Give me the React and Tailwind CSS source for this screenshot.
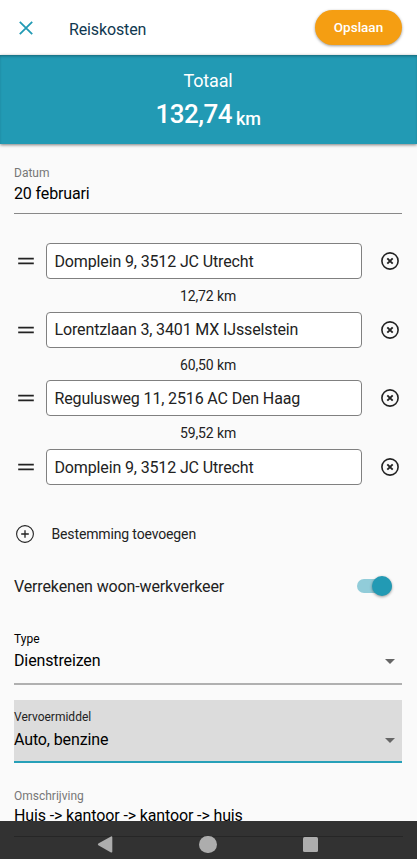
import React, { useState } from "react";

const initialStops = [
  { id: 1, address: "Domplein 9, 3512 JC Utrecht", distance: "12,72 km" },
  { id: 2, address: "Lorentzlaan 3, 3401 MX IJsselstein", distance: "60,50 km" },
  { id: 3, address: "Regulusweg 11, 2516 AC Den Haag", distance: "59,52 km" },
  { id: 4, address: "Domplein 9, 3512 JC Utrecht", distance: null },
];

const CloseIcon = () => (
  <svg width="14" height="14" viewBox="0 0 14 14" fill="none" stroke="#229ab4" strokeWidth="1.8">
    <path d="M0.8 0.8 13.2 13.2M13.2 0.8 0.8 13.2" />
  </svg>
);

const DragIcon = () => (
  <svg width="16" height="8" viewBox="0 0 16 8" fill="none" stroke="#222" strokeWidth="1.7">
    <path d="M0.2 1.6H15.8M0.2 6.4H15.8" />
  </svg>
);

const RemoveIcon = () => (
  <svg width="18" height="18" viewBox="0 0 18 18" fill="none" stroke="#222" strokeWidth="1.6">
    <circle cx="9" cy="9" r="8.1" />
    <path d="M6.3 6.3 11.7 11.7M11.7 6.3 6.3 11.7" strokeWidth="1.9" />
  </svg>
);

const AddIcon = () => (
  <svg width="18" height="18" viewBox="0 0 18 18" fill="none" stroke="#222" strokeWidth="1.1">
    <circle cx="9" cy="9" r="8.4" />
    <path d="M9 5.2V12.8M5.2 9H12.8" strokeWidth="1.3" />
  </svg>
);

const Caret = () => (
  <svg width="10" height="5" viewBox="0 0 10 5" fill="#666">
    <path d="M0 0H10L5 5Z" />
  </svg>
);

const StopRow = ({ stop }) => (
  <div>
    <div className="flex h-9 items-center">
      <button className="w-[31.5px] pl-1">
        <DragIcon />
      </button>
      <div className="flex h-9 w-[316.5px] items-center rounded-[4px] border border-[#808080] bg-white pt-px pl-2 text-[16px] tracking-[-0.14px] text-[#222]">
        {stop.address}
      </div>
      <button className="ml-[19px]">
        <RemoveIcon />
      </button>
    </div>
    {stop.distance && (
      <div className="flex h-[32.7px] items-center justify-center pt-[2px] text-[14px] tracking-[-0.12px] text-[#222]">
        {stop.distance}
      </div>
    )}
  </div>
);

const App = () => {
  const [stops] = useState(initialStops);
  const [settle, setSettle] = useState(true);

  return (
    <div className="flex h-[859px] w-[417px] flex-col overflow-hidden bg-[#fafafa] font-['Roboto',sans-serif]">
      {/* Header */}
      <header className="flex h-[55px] shrink-0 items-center bg-white pr-[15px] pl-[19px]">
        <button>
          <CloseIcon />
        </button>
        <h1 className="ml-9 flex-1 pt-1 text-[16px] tracking-[-0.13px] text-[#103850]">Reiskosten</h1>
        <button className="h-[35px] w-[87px] rounded-full bg-[#f59e12] text-[13.5px] font-medium text-white shadow-[0_1px_3px_rgba(0,0,0,0.4)]">
          Opslaan
        </button>
      </header>

      {/* Total */}
      <section className="flex h-[89px] shrink-0 flex-col items-center bg-[#229ab4] pt-[14px] pr-px text-white shadow-[inset_0_2px_3px_-1px_rgba(0,0,0,0.35),0_1px_3px_rgba(0,0,0,0.5)]">
        <div className="text-[18px] leading-6 tracking-[-0.15px]">Totaal</div>
        <div className="flex items-baseline gap-1 pt-px font-medium">
          <span className="text-[26px] leading-10 tracking-[-0.5px]">132,74</span>
          <span className="text-[18px] leading-10 tracking-[-0.3px]">
            <span className="relative top-[2px]">km</span>
          </span>
        </div>
      </section>

      <main className="min-h-0 flex-1 overflow-hidden pr-[15px] pl-[14px]">
        <div className="h-[70px] border-b border-[#888] pt-[21px]">
          <div className="text-[12px] leading-4 text-[#777]">Datum</div>
          <div className="pt-px text-[16px] leading-6 tracking-[-0.13px] text-black">20 februari</div>
        </div>

        {/* Stops */}
        <div className="pt-[29px]">
          {stops.map((stop) => (
            <StopRow key={stop.id} stop={stop} />
          ))}
        </div>

        <button className="mt-[37px] flex h-6 items-center gap-[17.5px] pl-[2px] text-[14px] tracking-[-0.14px] text-[#222]">
          <AddIcon />
          Bestemming toevoegen
        </button>

        <div className="mt-7 flex h-6 items-center justify-between pr-[10px] text-[16px] tracking-[-0.13px] text-[#222]">
          <span className="pt-px">Verrekenen woon-werkverkeer</span>
          <button
            onClick={() => setSettle(!settle)}
            className={`flex h-[14px] w-[35.5px] items-center rounded-full ${settle ? "justify-end bg-[#91ccd9]" : "justify-start bg-gray-300"}`}
          >
            <span className="h-5 w-5 shrink-0 rounded-full bg-[#229ab4] shadow-[0_1px_3px_rgba(0,0,0,0.4)]" />
          </button>
        </div>

        <div className="mt-[33px] h-[54px] border-b-2 border-[#b0b0b0]">
          <div className="text-[12px] leading-4 text-black">Type</div>
          <div className="flex items-center justify-between pt-[2px] pr-[7px] text-[16px] leading-6 tracking-[-0.13px] text-black">
            Dienstreizen
            <Caret />
          </div>
        </div>

        <div className="mt-[15px] h-[63px] border-b-2 border-[#27a0b8] bg-[#dcdcdc] pt-[9px]">
          <div className="text-[12px] leading-4 text-[#222]">Vervoermiddel</div>
          <div className="flex items-center justify-between pt-[3px] pr-[7px] text-[16px] leading-6 tracking-[-0.13px] text-black">
            Auto, benzine
            <Caret />
          </div>
        </div>

        <div className="pt-[25px]">
          <div className="text-[12px] leading-4 text-[#777]">Omschrijving</div>
          <div className="text-[16px] leading-6 tracking-[-0.13px] text-black">
            Huis -&gt; kantoor -&gt; kantoor -&gt; huis
          </div>
        </div>
      </main>

      {/* Android navigation bar */}
      <nav className="h-[38px] shrink-0 bg-[#323232] px-[14px] pt-[15px]">
        <div className="flex h-4 items-center border-t border-[#262626] pl-[83px]">
          <svg width="16" height="17" viewBox="0 0 16 17" fill="#adadad">
            <path d="M14 0.4Q15.3 0 15.3 1.5V15.5Q15.3 17 14 16.4L1.3 9.3Q0.3 8.5 1.3 7.6Z" />
          </svg>
          <span className="ml-[86px] h-[17.5px] w-[17.5px] rounded-full bg-[#adadad]" />
          <span className="ml-[86px] h-[15px] w-[15px] rounded-[1.5px] bg-[#adadad]" />
        </div>
      </nav>
    </div>
  );
};

export default App;
